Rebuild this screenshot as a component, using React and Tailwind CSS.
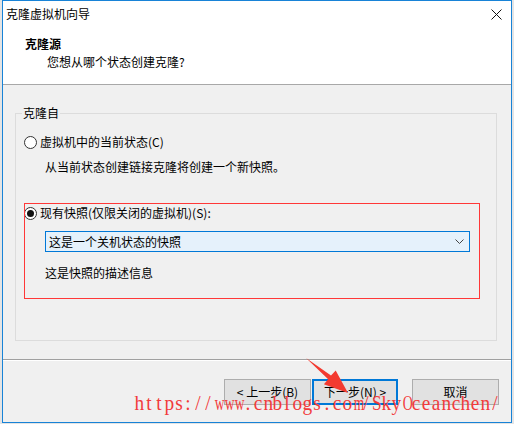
import React from "react";

const WATERMARK = "https://www.cnblogs.com/SkyOceanchen/";

function Radio({ checked }) {
  return (
    <span className="w-[13px] h-[13px] rounded-full border border-[#333333] bg-white flex items-center justify-center shrink-0">
      {checked ? <span className="w-[7px] h-[7px] rounded-full bg-[#111111]" /> : null}
    </span>
  );
}

function charClass(c) {
  if (c === "w" || c === "m") return "inline-block w-[9.9px] text-center scale-x-[0.64]";
  if (c === "O") return "inline-block w-[9.9px] text-center scale-x-[0.66]";
  if (c === "S") return "inline-block w-[9.9px] text-center scale-x-[0.82]";
  return "inline-block w-[9.9px] text-center scale-x-[0.92]";
}

export default function App() {
  return (
    <div
      className="relative w-[514px] h-[424px] overflow-hidden bg-[#e4e4e4] text-[12px] leading-[16px] text-black"
      style={{ fontFamily: '"Noto Sans CJK SC", "Noto Sans", sans-serif' }}
    >
      <div className="ml-[2px] w-[510px] h-[423px] border border-[#1883d7] bg-[#f0f0f0] flex flex-col">
        {/* header */}
        <div className="h-[84px] bg-white border-b border-[#a8a8a8] flex flex-col">
          <div className="h-[26px] flex items-center justify-between pl-[3px] pr-[9px]">
            <span>克隆虚拟机向导</span>
            <svg width="11" height="11" viewBox="0 0 11 11">
              <path d="M0.5 0.5 L10.5 10.5 M10.5 0.5 L0.5 10.5" stroke="#111" strokeWidth="1" fill="none" />
            </svg>
          </div>
          <div className="mt-[9px] pl-[22px] font-bold h-[16px]">克隆源</div>
          <div className="mt-[2px] pl-[44px] h-[16px]">您想从哪个状态创建克隆?</div>
        </div>

        {/* group box */}
        <div className="relative mt-[28px] ml-[12px] w-[482px] h-[228px] border border-[#dcdcdc] flex flex-col">
          <span className="absolute left-[6px] top-[-9px] px-[1px] bg-[#f0f0f0]">克隆自</span>
          <div className="mt-[20px] pl-[8px] h-[16px] flex items-center">
            <Radio />
            <span className="ml-[3px]">虚拟机中的当前状态(C)</span>
          </div>
          <div className="mt-[9px] pl-[29px] h-[16px]">从当前状态创建链接克隆将创建一个新快照。</div>
          <div className="mt-[30px] pl-[8px] h-[16px] flex items-center">
            <Radio checked />
            <span className="ml-[3px]">现有快照(仅限关闭的虚拟机)(S):</span>
          </div>
          <div className="mt-[10px] ml-[29px] w-[425px] h-[21px] border border-[#0078d7] bg-[#e5f1fb] flex items-center justify-between pl-[3px] pr-[5px]">
            <span>这是一个关机状态的快照</span>
            <svg width="9" height="5" viewBox="0 0 9 5">
              <path d="M0.5 0.5 L4.5 4.5 L8.5 0.5" stroke="#444" strokeWidth="1" fill="none" />
            </svg>
          </div>
          <div className="mt-[13px] pl-[29px] h-[16px]">这是快照的描述信息</div>
        </div>

        {/* separator */}
        <div className="mt-[18px] h-[2px] border-t border-[#a0a0a0] border-b border-b-white" />

        {/* buttons */}
        <div className="mt-[18px] flex justify-end pr-[12px]">
          <div className="w-[87px] h-[26px] bg-[#e1e1e1] border border-[#adadad] flex items-center justify-center">
            &lt; 上一步(B)
          </div>
          <div className="ml-[1px] w-[86px] h-[26px] bg-[#e1e1e1] border-2 border-[#0078d7] flex items-center justify-center">
            下一步(N) &gt;
          </div>
          <div className="ml-[14px] w-[87px] h-[26px] bg-[#e1e1e1] border border-[#adadad] flex items-center justify-center">
            取消
          </div>
        </div>
      </div>

      {/* annotation: red rectangle */}
      <div className="absolute left-[24px] top-[203px] w-[456px] h-[96px] border border-[#ff3838]" />

      {/* annotation: red arrow */}
      <svg className="absolute left-0 top-0" width="514" height="424" viewBox="0 0 514 424">
        <polygon
          points="306,358 331,375.5 335.7,370.6 348,393 323.9,384.2 328.2,379.3"
          fill="#f33a30"
        />
      </svg>

      {/* watermark */}
      <div
        className="absolute left-[134px] top-[393px] h-[21px] text-[21px] leading-[21px] text-[#f23b3b] whitespace-nowrap flex"
        style={{ fontFamily: '"Liberation Serif", serif' }}
      >
        {WATERMARK.split("").map((c, i) => (
          <span key={i} className={charClass(c)}>
            {c}
          </span>
        ))}
      </div>
    </div>
  );
}
